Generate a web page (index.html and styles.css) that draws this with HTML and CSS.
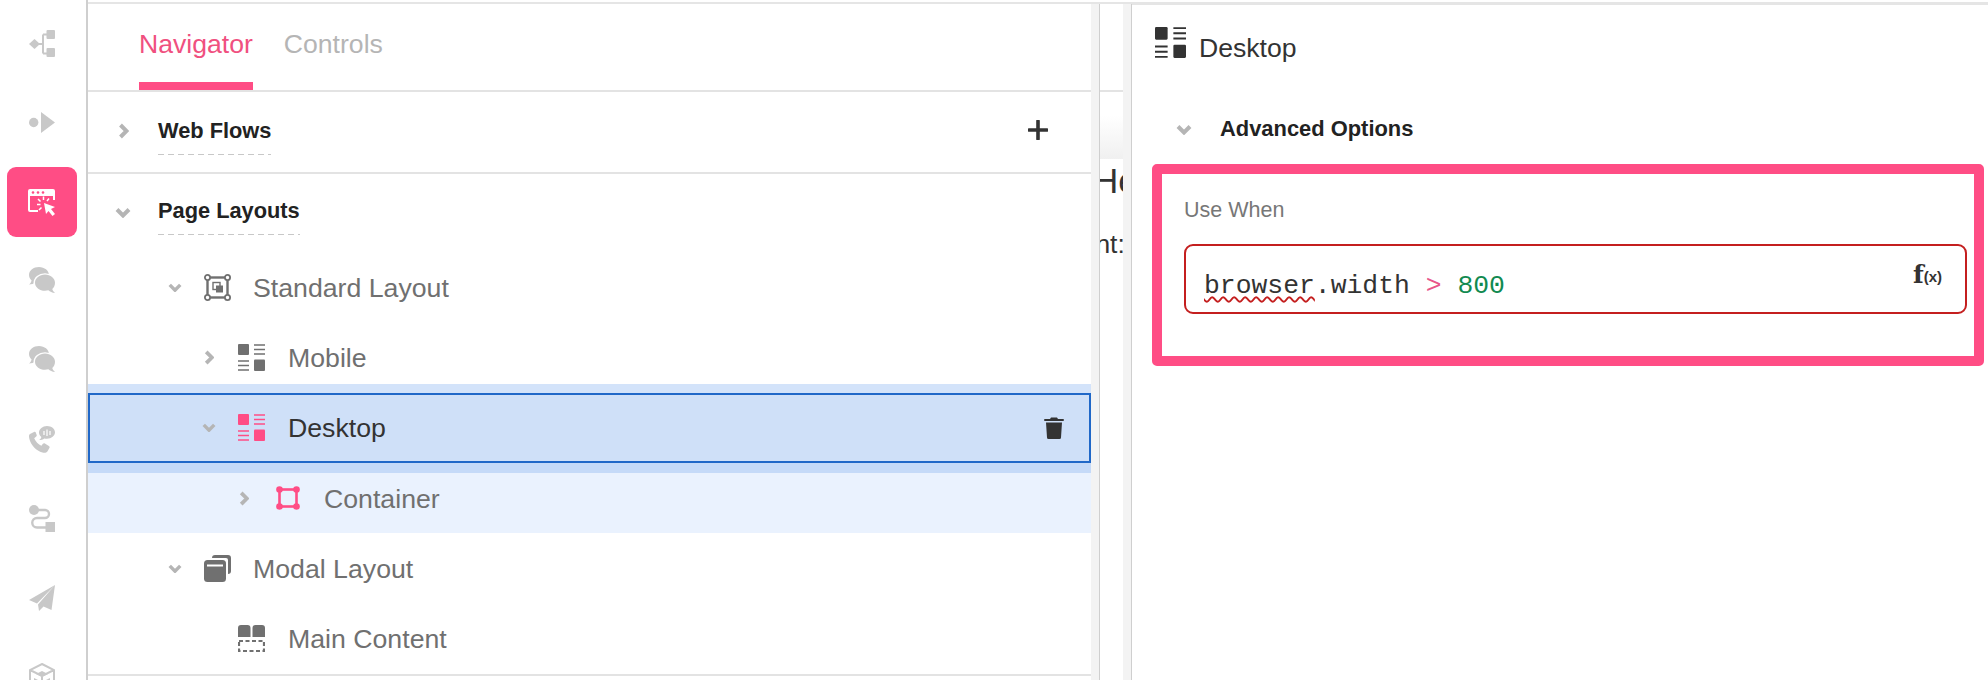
FILE: index.html
```html
<!DOCTYPE html>
<html lang="en">
<head>
<meta charset="utf-8">
<title>Navigator</title>
<link rel="stylesheet" href="styles.css">
</head>
<body>
<svg class="defs" width="0" height="0" aria-hidden="true">
  <symbol id="chev-r" viewBox="0 0 10 16"><path d="M2 2l6 6-6 6" fill="none" stroke="currentColor" stroke-width="4"/></symbol>
  <symbol id="chev-d" viewBox="0 0 16 10"><path d="M2 2l6 6 6-6" fill="none" stroke="currentColor" stroke-width="4"/></symbol>
  <symbol id="layout" viewBox="0 0 27 27">
    <rect x="0" y="0" width="11" height="11" rx="1" fill="currentColor"/>
    <path d="M16 1h11M16 5.500h11M16 10h11M0 17h11M0 21.500h11M0 26h11" stroke="currentColor" stroke-width="1.700" fill="none"/>
    <rect x="16" y="15.500" width="11" height="11.500" rx="1" fill="currentColor"/>
  </symbol>
  <symbol id="chat" viewBox="0 0 26 28">
    <path d="M10 0C4.500 0 0 3.500 0 8c0 2.200 1 4.100 2.600 5.500C2.300 15 1.300 16.500 0 17.500c2.600 0 4.700-.8 6.300-2C7.500 16 8.800 16.200 10 16.200c5.500 0 10-3.600 10-8.100S15.500 0 10 0z" fill="currentColor"/>
    <ellipse cx="16" cy="16" rx="11.500" ry="9.800" fill="#fff"/>
    <path d="M16 7.500c-5.500 0-10 3.700-10 8.200s4.500 8.100 10 8.100c1.200 0 2.300-.2 3.400-.5 1.500 1.400 3.800 2.500 6.600 2.700-1.300-1-2.300-2.300-2.700-3.900 1.700-1.500 2.700-4.300 2.700-6.400 0-4.500-4.500-8.200-10-8.200z" fill="currentColor"/>
  </symbol>
</svg>

<div class="app">
  <nav class="rail">
    <div class="rail-item">
      <svg class="rail-ico" width="26" height="27" viewBox="0 0 26 27"><path d="M0 14l5.500-5 5.500 5-5.500 5z"/><rect x="17.500" y="0" width="8.500" height="9" rx="1"/><rect x="17.500" y="18" width="8.500" height="9" rx="1"/><path d="M9 14h5M14 4.500v19M14 4.500h4M14 23.500h4" fill="none" stroke="currentColor" stroke-width="2"/></svg>
    </div>
    <div class="rail-item">
      <svg class="rail-ico" width="26" height="21" viewBox="0 0 26 21"><circle cx="4.700" cy="10.500" r="4.700"/><path d="M12 0l14 10.500L12 21z"/></svg>
    </div>
    <div class="rail-item">
      <div class="rail-active">
        <svg width="28" height="28" viewBox="0 0 28 28"><path d="M2 1h23a2 2 0 0 1 2 2v9h-2V8H2v14h8v2H2a2 2 0 0 1-2-2V3a2 2 0 0 1 2-2z" fill="#fff"/><circle cx="5" cy="4.500" r="1.300" fill="#ff4d85"/><circle cx="10" cy="4.500" r="1.300" fill="#ff4d85"/><circle cx="15" cy="4.500" r="1.300" fill="#ff4d85"/><path d="M16 15l11 4-4 2 4 5-2.500 2-4-5-2.500 3z" fill="#fff"/><path d="M15.500 8.500v3.500M10 11l2.500 2.500M21 10.500l-2 2.500M9 16.500h3.500M11 22l2.500-2.500" stroke="#fff" stroke-width="1.500" fill="none"/></svg>
      </div>
    </div>
    <div class="rail-item"><svg class="rail-ico" width="26" height="28"><use href="#chat"/></svg></div>
    <div class="rail-item"><svg class="rail-ico" width="26" height="28"><use href="#chat"/></svg></div>
    <div class="rail-item">
      <svg class="rail-ico" width="26" height="27" viewBox="0 0 26 27"><path d="M5 6L1 8c-1.500 1-1 3-.6 5 1.500 6 7 12 13 13.500 2 .4 4 .4 5-1l2-3.500c.4-.8.2-1.500-.5-2l-4-2.500c-.7-.4-1.400-.3-2 .3l-1.500 2c-3-1.200-6-4.500-7.200-7.500l2-1.700c.6-.5.700-1.200.4-1.900L6.800 6.500C6.400 5.800 5.700 5.600 5 6z"/><path d="M18 0c-4.400 0-8 3-8 6.500 0 1.800.9 3.400 2.300 4.500-.2 1.200-1 2.300-2.300 3 2.200 0 4-.6 5.300-1.600.9.300 1.800.4 2.700.4 4.400 0 8-3 8-6.500S22.400 0 18 0z"/><path d="M15 5v4M18 3.500v6.500M21 5v4" stroke="#fff" stroke-width="1.200" fill="none"/></svg>
    </div>
    <div class="rail-item">
      <svg class="rail-ico" width="26" height="27" viewBox="0 0 26 27"><circle cx="5" cy="5" r="5"/><rect x="16.500" y="17" width="9.500" height="10"/><path d="M9 5h7a4 4 0 0 1 0 8H8a4.500 4.500 0 0 0 0 9.500h9" fill="none" stroke="currentColor" stroke-width="2.400"/></svg>
    </div>
    <div class="rail-item">
      <svg class="rail-ico" width="26" height="26" viewBox="0 0 26 26"><path d="M26 0L0 15l8 3.500L26 0zM26 0L9 19.500 10 26l4.500-4.500 8 3.500z"/></svg>
    </div>
    <div class="rail-item">
      <svg class="rail-ico" width="26" height="28" viewBox="0 0 26 28"><path d="M13 1l12 6v14l-12 6-12-6V7zM1 7l12 6 12-6M13 13v14" fill="none" stroke="currentColor" stroke-width="2"/><path d="M7 11l6 3 6-3-6-3z"/><path d="M5 15l6 3v6l-6-3zM21 15l-6 3v6l6-3z"/></svg>
    </div>
  </nav>

  <div class="main">
    <div class="topline"></div>
    <div class="columns">
      <section class="navigator">
        <div class="tabs">
          <span class="tab tab-on">Navigator</span>
          <span class="tab">Controls</span>
        </div>

        <div class="section section-flows">
          <svg class="chev-section-r" width="11" height="16"><use href="#chev-r"/></svg>
          <span class="section-title">Web Flows</span>
          <svg class="plus" width="20" height="20" viewBox="0 0 20 20"><path d="M10 1v18M1 10h18" stroke="currentColor" stroke-width="3.600" stroke-linecap="round" fill="none"/></svg>
        </div>

        <div class="section section-pages">
          <svg class="chev-section-d" width="16" height="11"><use href="#chev-d"/></svg>
          <span class="section-title">Page Layouts</span>
        </div>

        <div class="tree">
          <div class="row lv1">
            <span class="slot"><svg class="chev-d" width="14" height="9"><use href="#chev-d"/></svg></span>
            <svg class="ico" width="27" height="27" viewBox="0 0 27 27"><rect x="3.500" y="3.500" width="20" height="20" fill="none" stroke="currentColor" stroke-width="2.400"/><circle cx="3.500" cy="3.500" r="2.600" fill="#fff" stroke="currentColor" stroke-width="1.800"/><circle cx="23.500" cy="3.500" r="2.600" fill="#fff" stroke="currentColor" stroke-width="1.800"/><circle cx="3.500" cy="23.500" r="2.600" fill="#fff" stroke="currentColor" stroke-width="1.800"/><circle cx="23.500" cy="23.500" r="2.600" fill="#fff" stroke="currentColor" stroke-width="1.800"/><rect x="9" y="8.500" width="7" height="7" fill="none" stroke="currentColor" stroke-width="1.400"/><rect x="12" y="11.500" width="7" height="7" fill="currentColor"/></svg>
            <span class="label">Standard Layout</span>
          </div>
          <div class="row lv2">
            <span class="slot"><svg class="chev-r" width="10" height="15"><use href="#chev-r"/></svg></span>
            <svg class="ico" width="27" height="27"><use href="#layout"/></svg>
            <span class="label">Mobile</span>
          </div>
          <div class="row lv2 row-selected">
            <span class="slot"><svg class="chev-d" width="14" height="9"><use href="#chev-d"/></svg></span>
            <svg class="ico ico-pink" width="27" height="27"><use href="#layout"/></svg>
            <span class="label">Desktop</span>
            <svg class="trash" width="20" height="23" viewBox="0 0 20 23"><path d="M7 1.500h6l1 1.500h5a1 1 0 0 1 0 2H1a1 1 0 0 1 0-2h5z"/><path d="M2 6.500h16l-1 15a1.500 1.500 0 0 1-1.500 1.500h-11A1.500 1.500 0 0 1 3 21.500z"/></svg>
          </div>
          <div class="row lv3 row-child">
            <span class="slot"><svg class="chev-r" width="10" height="15"><use href="#chev-r"/></svg></span>
            <svg class="ico ico-pink" width="24" height="24" viewBox="0 0 24 24"><rect x="3.500" y="3.500" width="17" height="17" fill="none" stroke="currentColor" stroke-width="2.600"/><circle cx="3.500" cy="3.500" r="3.300"/><circle cx="20.500" cy="3.500" r="3.300"/><circle cx="3.500" cy="20.500" r="3.300"/><circle cx="20.500" cy="20.500" r="3.300"/></svg>
            <span class="label">Container</span>
          </div>
          <div class="row lv1">
            <span class="slot"><svg class="chev-d" width="14" height="9"><use href="#chev-d"/></svg></span>
            <svg class="ico" width="27" height="27" viewBox="0 0 27 27"><path d="M8 3a3 3 0 0 1 3-3h13a3 3 0 0 1 3 3v13a3 3 0 0 1-3 3V5a2 2 0 0 0-2-2z"/><rect x="0" y="5" width="22" height="22" rx="3.500"/><rect x="3" y="9.500" width="16" height="2" fill="#fff"/></svg>
            <span class="label">Modal Layout</span>
          </div>
          <div class="row lv2">
            <span class="slot"></span>
            <svg class="ico" width="27" height="27" viewBox="0 0 27 27"><path d="M3 0h6.500a3 3 0 0 1 3 3v9H0V3a3 3 0 0 1 3-3zM17.500 0H24a3 3 0 0 1 3 3v9H14.500V3a3 3 0 0 1 3-3z"/><rect x="1" y="16" width="25" height="10" fill="none" stroke="currentColor" stroke-width="2.200" stroke-dasharray="4 2.500"/></svg>
            <span class="label">Main Content</span>
          </div>
        </div>
      </section>

      <div class="gutter"></div>

      <div class="canvas">
        <div class="canvas-head"></div>
        <div class="canvas-strip"></div>
        <div class="canvas-h1">Hello</div>
        <div class="canvas-p">Content:</div>
      </div>

      <div class="gutter"></div>

      <aside class="props">
        <header class="props-head">
          <svg class="props-ico" width="31" height="31"><use href="#layout"/></svg>
          <span class="props-title">Desktop</span>
        </header>
        <div class="adv">
          <svg class="chev-adv" width="16" height="11"><use href="#chev-d"/></svg>
          <span class="adv-title">Advanced Options</span>
        </div>
        <div class="callout">
          <div class="field-label">Use When</div>
          <div class="expr">
            <code class="code"><span class="squiggle">browser</span>.width <span class="op">&gt;</span> <span class="num">800</span></code>
            <span class="fx"><span class="fx-f">f</span><span class="fx-x">(x)</span></span>
          </div>
        </div>
      </aside>
    </div>
  </div>
</div>
</body>
</html>
```

FILE: styles.css
```css
* { box-sizing: border-box; }
html, body { margin: 0; padding: 0; background: #fff; }
body {
  width: 1988px;
  height: 680px;
  overflow: hidden;
  font-family: "Liberation Sans", Arial, sans-serif;
  color: #333;
}
.defs { position: absolute; }
.app { display: flex; height: 680px; }

/* left rail */
.rail {
  flex: 0 0 88px;
  border-right: 2px solid #cfcfcf;
  padding-top: 4px;
  overflow: hidden;
}
.rail-item {
  height: 79.2px;
  display: flex;
  align-items: center;
  padding-left: 7px;
}
.rail-ico { margin-left: 22px; fill: #c8c8c8; color: #c8c8c8; }
.rail-active {
  width: 70px;
  height: 70px;
  border-radius: 9px;
  background: #ff4d85;
  display: flex;
  align-items: center;
  justify-content: center;
}

/* main */
.main { flex: 1; display: flex; flex-direction: column; padding-top: 2px; min-width: 0; }
.topline { height: 2px; background: #e5e5e5; flex: none; }
.columns { flex: 1; display: flex; min-height: 0; }

/* navigator */
.navigator { flex: 0 0 1003px; display: flex; flex-direction: column; }
.tabs {
  height: 88px;
  flex: none;
  display: flex;
  gap: 31px;
  padding-left: 51px;
  border-bottom: 2px solid #e3e3e3;
}
.tab {
  padding-top: 25px;
  height: 86px;
  font-size: 26.6px;
  line-height: 30px;
  color: #b5b5b5;
  border-bottom: 8px solid transparent;
}
.tab-on { color: #f0507f; border-bottom-color: #ff4d85; }

.section { flex: none; display: flex; align-items: flex-start; border-bottom: 2px solid #e3e3e3; }
.section-flows { height: 82px; padding: 27px 0 0 30px; }
.section-pages { height: 78px; padding: 25px 0 0 27px; border-bottom: 0; }
.section-title {
  font-size: 21.8px;
  font-weight: 700;
  line-height: 24px;
  color: #222;
  padding-bottom: 11px;
  background: repeating-linear-gradient(90deg, #c8c8c8 0 6px, transparent 6px 10px) left bottom / 100% 1.5px no-repeat;
}
.section-flows .section-title { margin-left: 29px; padding-bottom: 12px; }
.section-pages .section-title { margin-left: 27px; padding-bottom: 12px; }
.chev-section-r { color: #b5b5b5; margin-top: 4px; }
.chev-section-d { color: #b5b5b5; margin-top: 8px; }
.plus { margin-left: auto; margin-right: 43px; margin-top: 1px; color: #333; }

.tree { border-bottom: 2px solid #e3e3e3; flex: none; }
.row {
  height: 70.3px;
  display: flex;
  align-items: center;
  font-size: 26.7px;
  color: #707070;
}
.label { padding-top: 2px; }
.slot { flex: 0 0 18px; display: flex; justify-content: center; color: #b5b5b5; }
.ico { flex: none; color: #707070; fill: #707070; }
.ico-pink { color: #ff4d85; fill: #ff4d85; }
.lv1 { padding-left: 78px; }
.lv1 .ico { margin-left: 20px; }
.lv1 .label { margin-left: 22px; }
.lv2 { padding-left: 112px; }
.lv2 .ico { margin-left: 20px; }
.lv2 .label { margin-left: 23px; }
.lv3 { padding-left: 147px; }
.lv3 .ico { margin-left: 23px; }
.lv3 .label { margin-left: 24px; }
.row-selected {
  position: relative;
  z-index: 1;
  background: #cfe0f8;
  color: #333;
  box-shadow: inset 0 0 0 2px #2068c8, 0 -9px 0 #d3e3fa, 0 10px 0 #c5daf8;
}
.row-child { background: #eaf2fe; }
.trash { margin-left: auto; margin-right: 27px; fill: #333; }

/* canvas sliver */
.gutter { flex: 0 0 9px; background: #f3f3f3; border-right: 1.5px solid #cfcfcf; }
.canvas { flex: 0 0 23px; overflow: hidden; display: flex; flex-direction: column; color: #333; }
.canvas-head { height: 88px; flex: none; border-bottom: 2px solid #e3e3e3; }
.canvas-strip { height: 67px; flex: none; background: linear-gradient(#fff 35%, #f0f0f0); }
.canvas-h1 {
  font-size: 35px;
  line-height: 40px;
  margin-top: 2px;
  margin-left: -7px;
  white-space: nowrap;
}
.canvas-p {
  font-size: 26.4px;
  line-height: 30px;
  margin-top: 28px;
  margin-left: -75px;
  white-space: nowrap;
}

/* properties */
.props { flex: 1; min-width: 0; border-top: 1px solid #e5e5e5; }
.props-head { display: flex; align-items: flex-start; padding: 22px 0 0 23px; height: 57px; }
.props-ico { color: #333; flex: none; }
.props-title { margin: 6px 0 0 13px; font-size: 26.6px; line-height: 30px; color: #333; }
.adv { display: flex; align-items: center; margin-top: 55px; padding-left: 44px; height: 24px; }
.chev-adv { color: #b5b5b5; flex: none; }
.adv-title { margin-left: 28px; font-size: 21.9px; font-weight: 700; line-height: 24px; color: #222; }
.callout {
  margin: 23px 0 0 20px;
  width: 832px;
  height: 202px;
  border: 10px solid #ff4d85;
  border-radius: 5px;
  padding: 24px 7px 0 22px;
}
.field-label { font-size: 21.5px; line-height: 24px; color: #777; }
.expr {
  margin-top: 22px;
  height: 70px;
  border: 2px solid #c41f1f;
  border-radius: 9px;
  padding: 0 23px 0 18px;
  display: flex;
  justify-content: space-between;
  align-items: flex-start;
}
.code {
  margin-top: 25px;
  font-family: "Liberation Mono", "Courier New", monospace;
  font-size: 26.4px;
  line-height: 30px;
  color: #333;
}
.squiggle { text-decoration: underline wavy #c41f1f 1.5px; text-underline-offset: 3px; }
.op { color: #e8558a; }
.num { color: #118a50; }
.fx { margin-top: 13px; display: flex; align-items: center; color: #333; font-weight: 700; }
.fx-f { font-family: "DejaVu Serif", serif; font-size: 25px; line-height: 28px; font-weight: 700; }
.fx-x { font-family: "Liberation Sans", sans-serif; font-size: 15px; line-height: 28px; margin-left: 0; margin-top: 4px; }
```
